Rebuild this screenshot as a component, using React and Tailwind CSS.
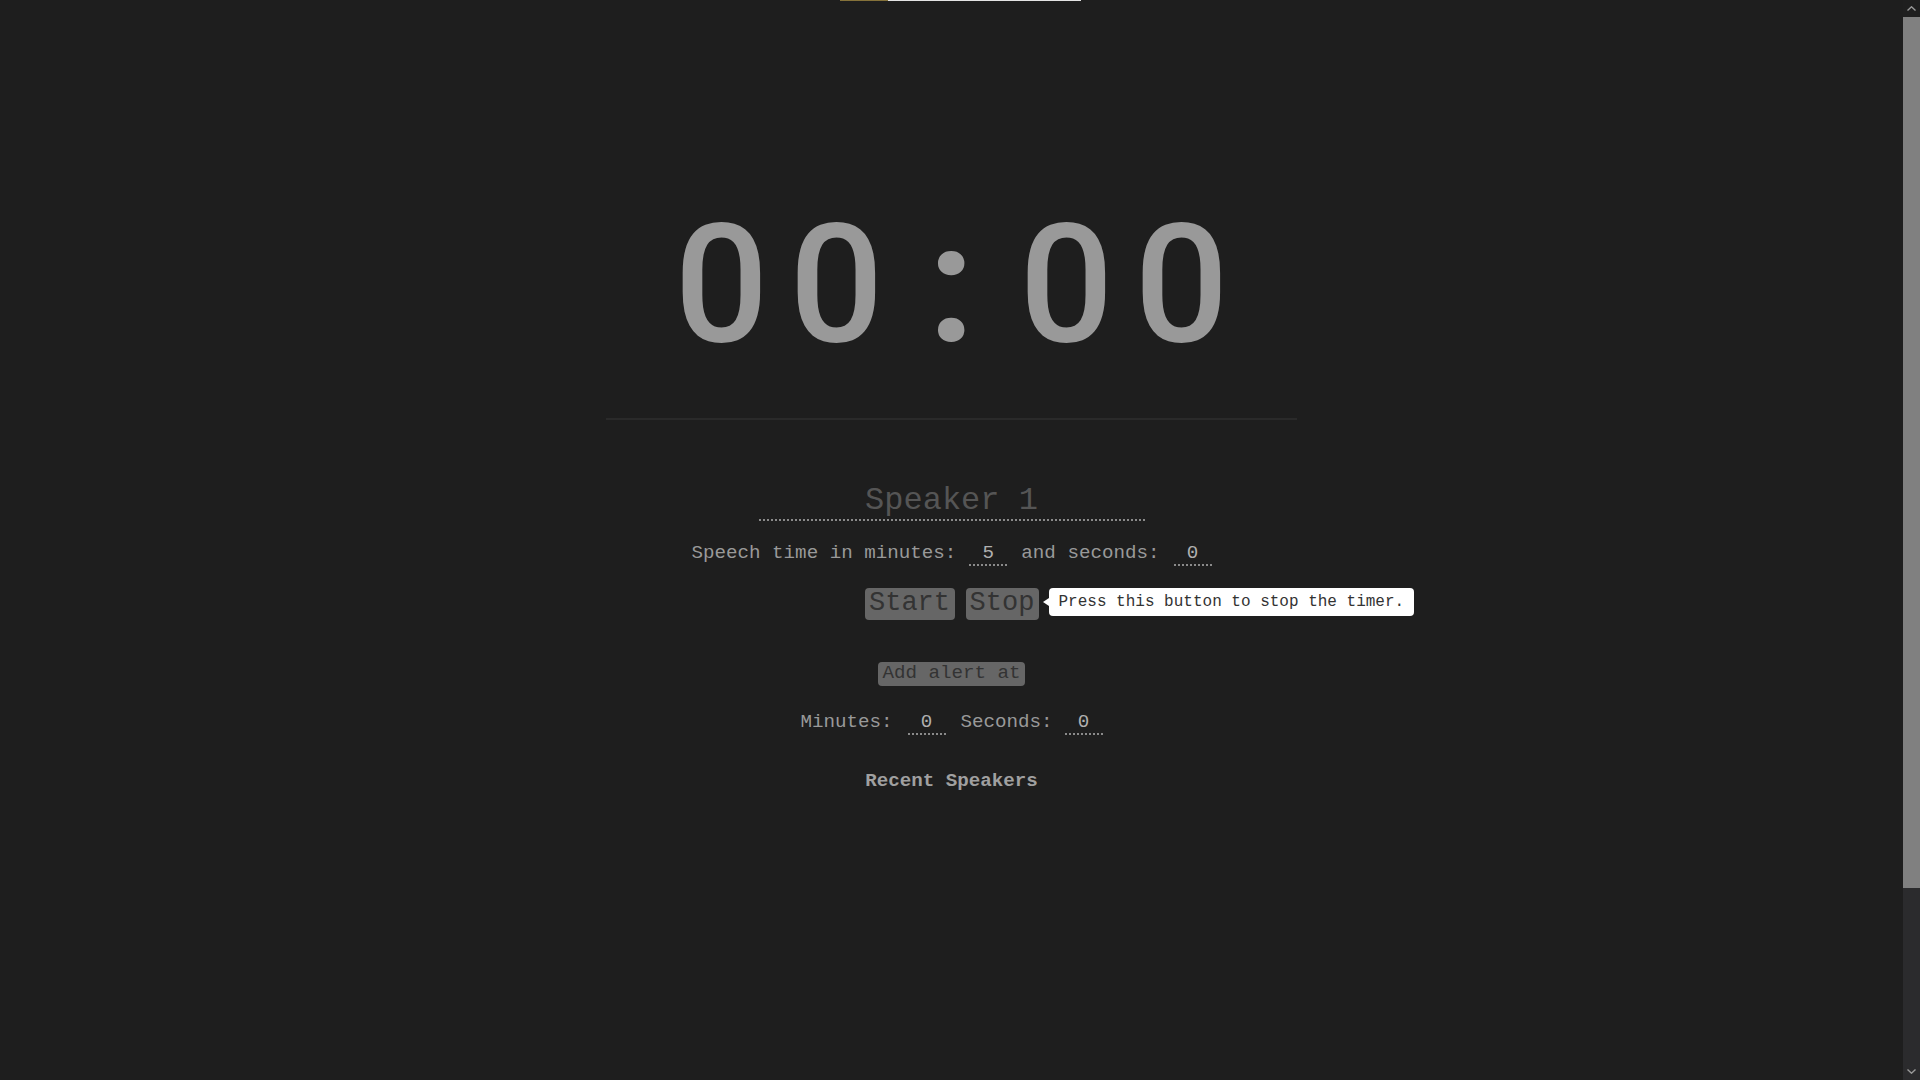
import React, { useState } from 'react';

const TimeInput = ({ value, onChange }) => (
  <input
    value={value}
    onChange={(e) => onChange(e.target.value)}
    className="w-[38px] bg-transparent text-center text-[#b0b0b0] outline-none border-0 border-b-2 border-dotted border-[#8a8a8a] p-0 leading-[22px] h-[24px] text-[19.2px] font-['Liberation_Mono',monospace]"
  />
);

const Timer = ({ text }) => (
  <div className="flex h-[166px] items-baseline font-['Roboto',sans-serif] text-[166px] leading-none font-medium text-[#999]">
    {text.split('').map((c, i) => (
      <span key={i} className={c === ':' ? 'w-[115px] text-center font-bold' : 'w-[115px] text-center'}>
        {c}
      </span>
    ))}
  </div>
);

// the page's own (dark) scrollbar, scrolled to the top
const Scrollbar = () => (
  <div className="flex w-[17px] shrink-0 flex-col bg-[#2b2b2d]">
    <div className="flex h-[17px] items-center justify-center bg-[#1f1f1f]">
      <svg width="9" height="5" viewBox="0 0 9 5">
        <path d="M0.5 4.5 L4.5 0.8 L8.5 4.5" fill="none" stroke="#9a9a9a" strokeWidth="1.4" />
      </svg>
    </div>
    <div className="h-[871px] bg-[#808080]" />
    <div className="flex-1" />
    <div className="flex h-[17px] items-center justify-center">
      <svg width="9" height="5" viewBox="0 0 9 5">
        <path d="M0.5 0.5 L4.5 4.2 L8.5 0.5" fill="none" stroke="#9a9a9a" strokeWidth="1.4" />
      </svg>
    </div>
  </div>
);

export default function App() {
  const [speaker, setSpeaker] = useState('');
  const [minutes, setMinutes] = useState('5');
  const [seconds, setSeconds] = useState('0');
  const [alertMin, setAlertMin] = useState('0');
  const [alertSec, setAlertSec] = useState('0');

  return (
    <div className="relative flex h-screen overflow-hidden bg-[#1e1e1e]">
      {/* progress strip at the very top */}
      <div className="absolute top-0 left-[840px] z-10 flex h-px w-[241px]">
        <div className="w-[48px] bg-[#85723a]" />
        <div className="flex-1 bg-[#e4e4e4]" />
      </div>

      <main className="flex flex-1 flex-col items-center pt-[202px] font-['Liberation_Mono',monospace] text-[19.2px] text-[#999]">
        <Timer text="00:00" />

        <hr className="mt-[50px] h-[2px] w-[691px] border-0 bg-[#2a2a2a]" />

        <input
          value={speaker}
          onChange={(e) => setSpeaker(e.target.value)}
          placeholder="Speaker 1"
          className="mt-[62px] h-[39px] w-[386px] border-0 border-b-2 border-dotted border-[#8a8a8a] bg-transparent p-0 text-center text-[32px] leading-[37px] text-[#aaa] outline-none placeholder:text-[#555] font-['Liberation_Mono',monospace]"
        />

        <div className="mt-[18px] flex items-baseline">
          <span>Speech time in minutes:</span>
          <span className="ml-[13px]">
            <TimeInput value={minutes} onChange={setMinutes} />
          </span>
          <span className="ml-[14px]">and seconds:</span>
          <span className="ml-[14px]">
            <TimeInput value={seconds} onChange={setSeconds} />
          </span>
        </div>

        <div className="relative mt-[20px] flex gap-[11px]">
          <button className="h-[32px] w-[90px] rounded-[4px] bg-[#666] text-[27px] leading-none text-[#333]">
            Start
          </button>
          <button className="h-[32px] w-[73px] rounded-[4px] bg-[#666] text-[27px] leading-none text-[#333]">
            Stop
          </button>
          <div className="absolute left-[178px] top-0 flex h-[28px] items-center">
            <div className="h-0 w-0 border-y-[4px] border-r-[6px] border-y-transparent border-r-white" />
            <div className="flex h-[28px] items-center whitespace-nowrap rounded-[4px] bg-white px-[10px] text-[16px] text-[#333]">
              Press this button to stop the timer.
            </div>
          </div>
        </div>

        <button className="mt-[42px] h-[24px] w-[147px] rounded-[4px] bg-[#666] text-[19.2px] leading-none text-[#333]">
          Add alert at
        </button>

        <div className="mt-[22px] flex items-baseline">
          <span>Minutes:</span>
          <span className="ml-[15px]">
            <TimeInput value={alertMin} onChange={setAlertMin} />
          </span>
          <span className="ml-[15px]">Seconds:</span>
          <span className="ml-[12px]">
            <TimeInput value={alertSec} onChange={setAlertSec} />
          </span>
        </div>

        <h3 className="mt-[30px] font-bold text-[#a0a0a0]">Recent Speakers</h3>
      </main>

      <Scrollbar />
    </div>
  );
}
